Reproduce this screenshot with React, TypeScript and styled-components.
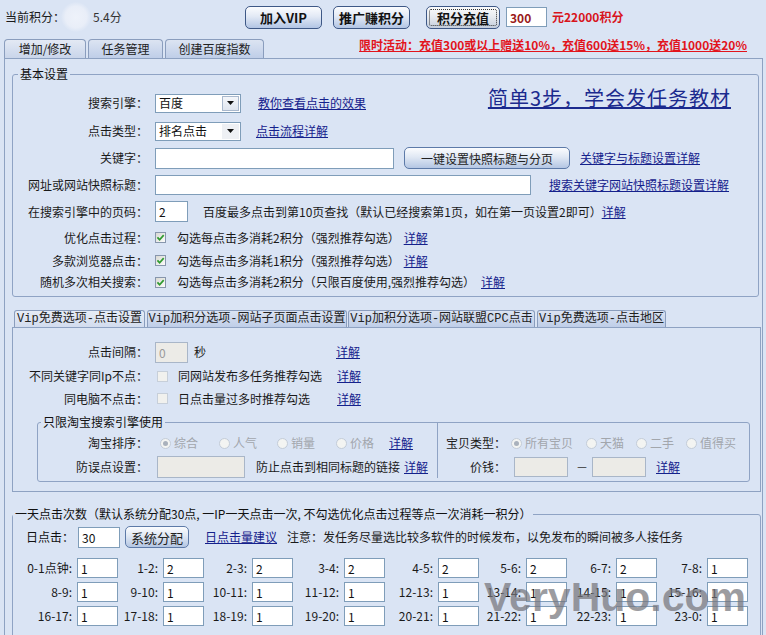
import React from "react";
import styled, { createGlobalStyle } from "styled-components";

const GlobalStyle = createGlobalStyle`
  html, body {
    margin: 0;
    padding: 0;
  }
  body {
    background: #dae4f4;
    font-family: "Noto Sans CJK SC", "Noto Sans", sans-serif;
    font-size: 12px;
    line-height: 16px;
    color: #111;
  }
`;

const hourRows: [string, string][] = [
  ["0-1点钟:", "1"],
  ["1-2:", "2"],
  ["2-3:", "2"],
  ["3-4:", "2"],
  ["4-5:", "2"],
  ["5-6:", "2"],
  ["6-7:", "2"],
  ["7-8:", "1"],
];
for (let h = 8; h < 24; h++) hourRows.push([`${h}-${(h + 1) % 24}:`, "1"]);

const Tick = () => (
  <svg width="9" height="9" viewBox="0 0 9 9">
    <path d="M1.4 4.4 L3.6 6.7 L7.7 2.1" fill="none" stroke="#2f9a2f" strokeWidth="1.7" />
  </svg>
);

const DownArrow = () => (
  <svg width="7" height="4" viewBox="0 0 7 4">
    <path d="M0 0 H7 L3.5 4 Z" fill="#111" />
  </svg>
);

const App = () => {
  return (
    <Page>
      <GlobalStyle />

      <TopBar>
        <ScoreBox>
          当前积分：
          <Smudge />
          <ScoreValue>5.4分</ScoreValue>
        </ScoreBox>
        <TopButton $w={77}>加入VIP</TopButton>
        <TopButton $w={77} $ml={11}>推广赚积分</TopButton>
        <TopButton $w={74} $ml={16} $focus>积分充值</TopButton>
        <ChargeInput readOnly value="300" />
        <ChargeText>元22000积分</ChargeText>
      </TopBar>

      <TabStrip>
        <MainTab $w={82} $active>增加/修改</MainTab>
        <MainTab $w={75}>任务管理</MainTab>
        <MainTab $w={99}>创建百度指数</MainTab>
        <Promo href="#">限时活动：充值300或以上赠送10%，充值600送15%，充值1000送20%</Promo>
      </TabStrip>

      <TabBody>
        {/* --- 基本设置 --- */}
        <BasicGroup>
          <GroupTitle $ml={5}>基本设置</GroupTitle>

          <FormRow $h={28}>
            <FieldLabel>搜索引擎：</FieldLabel>
            <Select>
              <SelectText>百度</SelectText>
              <SelectArrow $boxed>
                <DownArrow />
              </SelectArrow>
            </Select>
            <TextLink href="#" $ml={17}>教你查看点击的效果</TextLink>
            <BigLink href="#">简单3步，学会发任务教材</BigLink>
          </FormRow>

          <FormRow $h={28}>
            <FieldLabel>点击类型：</FieldLabel>
            <Select>
              <SelectText>排名点击</SelectText>
              <SelectArrow>
                <DownArrow />
              </SelectArrow>
            </Select>
            <TextLink href="#" $ml={15}>点击流程详解</TextLink>
          </FormRow>

          <FormRow $h={26}>
            <FieldLabel>关键字：</FieldLabel>
            <Field readOnly value="" $w={239} $h={21} />
            <PlainButton $w={166} $h={22} $ml={10}>一键设置快照标题与分页</PlainButton>
            <TextLink href="#" $ml={10}>关键字与标题设置详解</TextLink>
          </FormRow>

          <FormRow $h={27}>
            <FieldLabel>网址或网站快照标题：</FieldLabel>
            <Field readOnly value="" $w={376} $h={20} />
            <TextLink href="#" $ml={18}>搜索关键字网站快照标题设置详解</TextLink>
          </FormRow>

          <FormRow $h={27}>
            <FieldLabel>在搜索引擎中的页码：</FieldLabel>
            <Field readOnly value="2" $w={33} $h={21} />
            <Hint $ml={15}>百度最多点击到第10页查找（默认已经搜索第1页，如在第一页设置2即可）</Hint>
            <TextLink href="#" $ml={0}>详解</TextLink>
          </FormRow>

          <FormRow $h={25}>
            <FieldLabel>优化点击过程：</FieldLabel>
            <Check>
              <Tick />
            </Check>
            <Hint $ml={11}>勾选每点击多消耗2积分（强烈推荐勾选）</Hint>
            <TextLink href="#" $ml={4}>详解</TextLink>
          </FormRow>

          <FormRow $h={21}>
            <FieldLabel>多款浏览器点击：</FieldLabel>
            <Check>
              <Tick />
            </Check>
            <Hint $ml={11}>勾选每点击多消耗1积分（强烈推荐勾选）</Hint>
            <TextLink href="#" $ml={4}>详解</TextLink>
          </FormRow>

          <FormRow $h={22}>
            <FieldLabel>随机多次相关搜索：</FieldLabel>
            <Check>
              <Tick />
            </Check>
            <Hint $ml={11}>勾选每点击多消耗2积分（只限百度使用,强烈推荐勾选）</Hint>
            <TextLink href="#" $ml={6}>详解</TextLink>
          </FormRow>
        </BasicGroup>

        {/* --- Vip 选项 --- */}
        <VipStrip>
          <VipTab $w={131} $active>Vip免费选项-点击设置</VipTab>
          <VipTab $w={200} $ml={2}>Vip加积分选项-网站子页面点击设置</VipTab>
          <VipTab $w={187} $ml={1}>Vip加积分选项-网站联盟CPC点击</VipTab>
          <VipTab $w={129} $ml={2}>Vip免费选项-点击地区</VipTab>
        </VipStrip>

        <VipPanel>
          <FormRow $h={24}>
            <FieldLabel>点击间隔：</FieldLabel>
            <ControlCell>
              <Field readOnly value="0" $w={33} $h={21} $disabled />
              <Hint $ml={6}>秒</Hint>
            </ControlCell>
            <TextLink href="#">详解</TextLink>
          </FormRow>

          <FormRow $h={24}>
            <FieldLabel>不同关键字同Ip不点：</FieldLabel>
            <ControlCell>
              <Check $off $ml={2} />
              <Hint $ml={10}>同网站发布多任务推荐勾选</Hint>
            </ControlCell>
            <TextLink href="#" $ml={1}>详解</TextLink>
          </FormRow>

          <FormRow $h={21}>
            <FieldLabel>同电脑不点击：</FieldLabel>
            <ControlCell>
              <Check $off $ml={2} />
              <Hint $ml={10}>日点击量过多时推荐勾选</Hint>
            </ControlCell>
            <TextLink href="#" $ml={1}>详解</TextLink>
          </FormRow>

          <TaobaoGroup>
            <GroupTitle $ml={3}>只限淘宝搜索引擎使用</GroupTitle>
            <TaobaoBody>
              <TaobaoLeft>
                <FormRow $h={24}>
                  <FieldLabel $w={110} $mr={7}>淘宝排序：</FieldLabel>
                  <RadioItem $w={59} $ml={5}>
                    <Radio $on />
                    综合
                  </RadioItem>
                  <RadioItem $w={58}>
                    <Radio />
                    人气
                  </RadioItem>
                  <RadioItem $w={59}>
                    <Radio />
                    销量
                  </RadioItem>
                  <RadioItem $w={36}>
                    <Radio />
                    价格
                  </RadioItem>
                  <TextLink href="#" $ml={17}>详解</TextLink>
                </FormRow>
                <FormRow $h={23}>
                  <FieldLabel $w={110} $mr={9}>防误点设置：</FieldLabel>
                  <Field readOnly value="" $w={88} $h={22} $disabled />
                  <Hint $ml={11}>防止点击到相同标题的链接</Hint>
                  <TextLink href="#" $ml={4}>详解</TextLink>
                </FormRow>
              </TaobaoLeft>

              <TaobaoRight>
                <FormRow $h={24}>
                  <FieldLabel $w={60} $mr={0}>宝贝类型：</FieldLabel>
                  <RadioItem $w={75} $ml={5}>
                    <Radio $on />
                    所有宝贝
                  </RadioItem>
                  <RadioItem $w={50}>
                    <Radio />
                    天猫
                  </RadioItem>
                  <RadioItem $w={50}>
                    <Radio />
                    二手
                  </RadioItem>
                  <RadioItem $w={52}>
                    <Radio />
                    值得买
                  </RadioItem>
                </FormRow>
                <FormRow $h={23}>
                  <FieldLabel $w={60} $mr={8}>价钱：</FieldLabel>
                  <Field readOnly value="" $w={54} $h={20} $disabled />
                  <Dash>－</Dash>
                  <Field readOnly value="" $w={54} $h={20} $disabled />
                  <TextLink href="#" $ml={10}>详解</TextLink>
                </FormRow>
              </TaobaoRight>
            </TaobaoBody>
          </TaobaoGroup>
        </VipPanel>

        {/* --- 一天点击次数 --- */}
        <DayGroup>
          <GroupTitle $ml={0}>
            一天点击次数（默认系统分配30点, 一IP一天点击一次, 不勾选优化点击过程等点一次消耗一积分）
          </GroupTitle>
          <DayRow>
            日点击：
            <Field readOnly value="30" $w={42} $h={21} $ml={4} />
            <PlainButton $w={64} $h={22} $ml={5} $big>系统分配</PlainButton>
            <TextLink href="#" $ml={16}>日点击量建议</TextLink>
            <Hint $ml={10}>注意：发任务尽量选比较多软件的时候发布，以免发布的瞬间被多人接任务</Hint>
          </DayRow>
          <HourGrid>
            {hourRows.map(([label, value]) => (
              <HourCell key={label}>
                <HourLabel>{label}</HourLabel>
                <Field readOnly value={value} $w={41} $h={20} />
              </HourCell>
            ))}
          </HourGrid>
        </DayGroup>
      </TabBody>

      <Watermark>VeryHuo.com</Watermark>
    </Page>
  );
};

//  --- Page & top bar ---
const Page = styled.div`
  position: relative;
  width: 766px;
  height: 635px;
  overflow: hidden;
  box-sizing: border-box;
  padding: 0 3px 0 4px;
`;

const TopBar = styled.div`
  display: flex;
  align-items: center;
  height: 34px;
  padding-left: 1px;
`;

const ScoreBox = styled.div`
  display: flex;
  align-items: center;
  width: 240px;
  flex: none;
  color: #1a1a1a;
`;

const Smudge = styled.span`
  flex: none;
  width: 30px;
  height: 30px;
  margin-left: -4px;
  border-radius: 50%;
  background: radial-gradient(circle, #eef2fa 0%, #e9eef8 50%, rgba(228, 235, 247, 0) 72%);
`;

const ScoreValue = styled.span`
  margin-left: 2px;
  color: #333;
`;

const TopButton = styled.button<{ $w: number; $ml?: number; $focus?: boolean }>`
  flex: none;
  width: ${(p) => p.$w}px;
  height: 23px;
  margin-left: ${(p) => p.$ml ?? 0}px;
  padding: 0;
  border: 1px solid #3e5886;
  border-radius: 5px;
  background: ${(p) =>
    p.$focus
      ? "linear-gradient(#fbfbfb, #e6e9ee 50%, #c3cddd)"
      : "linear-gradient(#fbfcfe, #e2e9f5 45%, #b2c5e4)"};
  font-family: "Noto Sans CJK SC", sans-serif;
  font-size: 13px;
  font-weight: bold;
  line-height: 21px;
  color: #111;
  outline: ${(p) => (p.$focus ? "1px dotted #333" : "none")};
  outline-offset: -4px;
`;

const ChargeInput = styled.input`
  flex: none;
  box-sizing: border-box;
  width: 41px;
  height: 20px;
  margin-left: 6px;
  padding: 0 3px;
  border: 1px solid #7f9db9;
  background: #fff;
  font-family: "Noto Sans CJK SC", sans-serif;
  font-size: 12px;
  font-weight: bold;
  color: #9a1a1a;
`;

const ChargeText = styled.span`
  margin-left: 5px;
  color: #d8141c;
  font-weight: bold;
`;

//  --- Tabs ---
const TabStrip = styled.div`
  display: flex;
  align-items: flex-end;
  height: 24px;
`;

const MainTab = styled.div<{ $w: number; $active?: boolean }>`
  flex: none;
  box-sizing: border-box;
  width: ${(p) => p.$w}px;
  height: 19px;
  margin-right: 2px;
  border: 1px solid #8a9dbd;
  border-bottom: none;
  border-radius: 4px 4px 0 0;
  background: ${(p) =>
    p.$active ? "linear-gradient(#e3e9f4, #c9d5ea)" : "linear-gradient(#dce4f2, #bfcee8)"};
  text-align: center;
  line-height: 18px;
  color: #222;
`;

const Promo = styled.a`
  align-self: flex-start;
  margin: 3px 16px 0 auto;
  color: #e2141c;
  font-weight: bold;
  text-decoration: underline;
  white-space: nowrap;
`;

const TabBody = styled.div`
  border: 1px solid #8ea2c2;
  border-bottom: none;
  padding: 7px 1px 0 7px;
  height: 600px;
`;

//  --- Fieldsets ---
const Group = styled.fieldset`
  margin: 0;
  min-width: 0;
  border: 1px solid #8fa3c4;
  border-radius: 3px;
`;

const GroupTitle = styled.legend<{ $ml: number }>`
  margin-left: ${(p) => p.$ml}px;
  padding: 0 2px;
  font-size: 12px;
  line-height: 16px;
  color: #111;
  white-space: nowrap;
`;

const BasicGroup = styled(Group)`
  margin-right: 2px;
  padding: 7px 0 3px;
`;

const FormRow = styled.div<{ $h: number }>`
  display: flex;
  align-items: center;
  height: ${(p) => p.$h}px;
  white-space: nowrap;
`;

const FieldLabel = styled.span<{ $w?: number; $mr?: number }>`
  flex: none;
  width: ${(p) => p.$w ?? 135}px;
  margin-right: ${(p) => p.$mr ?? 7}px;
  text-align: right;
  color: #1a1a1a;
`;

const Select = styled.div`
  flex: none;
  display: flex;
  align-items: center;
  box-sizing: border-box;
  width: 86px;
  height: 19px;
  padding-left: 3px;
  border: 1px solid #7f9db9;
  background: #fff;
`;

const SelectText = styled.span`
  flex: 1;
`;

const SelectArrow = styled.span<{ $boxed?: boolean }>`
  display: flex;
  align-items: center;
  justify-content: center;
  box-sizing: border-box;
  width: 17px;
  height: 15px;
  margin-right: 1px;
  border: 1px solid ${(p) => (p.$boxed ? "#a9b8cd" : "transparent")};
  background: ${(p) => (p.$boxed ? "linear-gradient(#f4f6fa, #dfe5ef)" : "#eef0f4")};
`;

const Field = styled.input<{ $w: number; $h: number; $ml?: number; $disabled?: boolean }>`
  flex: none;
  box-sizing: border-box;
  width: ${(p) => p.$w}px;
  height: ${(p) => p.$h}px;
  margin: 0 0 0 ${(p) => p.$ml ?? 0}px;
  padding: 0 3px;
  border: 1px solid ${(p) => (p.$disabled ? "#a9b6c8" : "#7f9db9")};
  background: ${(p) => (p.$disabled ? "#ecebe7" : "#fff")};
  font-family: "Noto Sans CJK SC", sans-serif;
  font-size: 12px;
  color: ${(p) => (p.$disabled ? "#9a9a9a" : "#111")};
  outline: none;
`;

const PlainButton = styled.button<{ $w: number; $h: number; $ml: number; $big?: boolean }>`
  flex: none;
  width: ${(p) => p.$w}px;
  height: ${(p) => p.$h}px;
  margin-left: ${(p) => p.$ml}px;
  padding: 0;
  border: 1px solid #5d7aa8;
  border-radius: 5px;
  background: linear-gradient(#fbfcfe, #e0e8f4 45%, #b4c6e3);
  font-family: "Noto Sans CJK SC", sans-serif;
  font-size: ${(p) => (p.$big ? 13 : 12)}px;
  color: #222;
`;

const TextLink = styled.a<{ $ml?: number }>`
  flex: none;
  margin-left: ${(p) => p.$ml ?? 0}px;
  color: #15218c;
  text-decoration: underline;
  white-space: nowrap;
`;

const BigLink = styled.a`
  align-self: flex-start;
  margin: -3px 27px 0 auto;
  font-size: 20px;
  line-height: 24px;
  letter-spacing: 1px;
  color: #1b2a8e;
  text-decoration: underline;
`;

const Hint = styled.span<{ $ml?: number }>`
  flex: none;
  margin-left: ${(p) => p.$ml ?? 0}px;
  color: #1a1a1a;
`;

const Check = styled.span<{ $off?: boolean; $ml?: number }>`
  flex: none;
  display: inline-flex;
  align-items: center;
  justify-content: center;
  box-sizing: border-box;
  width: 11px;
  height: 11px;
  margin-left: ${(p) => p.$ml ?? 0}px;
  border: 1px solid ${(p) => (p.$off ? "#c7cfd9" : "#8796ac")};
  background: ${(p) => (p.$off ? "#f1f1ee" : "linear-gradient(135deg, #d9d9d3, #fbfbfb)")};
`;

//  --- Vip tabs ---
const VipStrip = styled.div`
  display: flex;
  align-items: flex-end;
  height: 17px;
  margin-top: 13px;
  padding-left: 2px;
`;

const VipTab = styled.div<{ $w: number; $ml?: number; $active?: boolean }>`
  flex: none;
  box-sizing: border-box;
  width: ${(p) => p.$w}px;
  height: 17px;
  margin-left: ${(p) => p.$ml ?? 0}px;
  border: 1px solid #8a9dbd;
  border-bottom: none;
  border-radius: 3px 3px 0 0;
  background: ${(p) =>
    p.$active ? "linear-gradient(#e6ecf6, #d2dcee)" : "linear-gradient(#dbe3f2, #bfcee8)"};
  font-family: "Liberation Mono", "Noto Sans CJK SC", monospace;
  font-size: 12px;
  line-height: 16px;
  text-align: center;
  white-space: nowrap;
  overflow: hidden;
  color: #222;
`;

const VipPanel = styled.div`
  border: 1px solid #8ea2c2;
  padding: 12px 0 9px;
`;

const ControlCell = styled.div`
  flex: none;
  display: flex;
  align-items: center;
  width: 181px;
`;

const TaobaoGroup = styled(Group)`
  margin: 5px 10px 0 24px;
  padding: 1px 0 3px;
`;

const TaobaoBody = styled.div`
  display: flex;
  margin-top: -9px;
  padding-top: 9px;
`;

const TaobaoLeft = styled.div`
  flex: none;
  width: 399px;
  border-right: 1px solid #8fa3c4;
  margin-top: -9px;
  padding-top: 9px;
`;

const TaobaoRight = styled.div`
  flex: 1;
  padding-left: 8px;
`;

const RadioItem = styled.span<{ $w: number; $ml?: number }>`
  flex: none;
  display: inline-flex;
  align-items: center;
  gap: 3px;
  width: ${(p) => p.$w}px;
  margin-left: ${(p) => p.$ml ?? 0}px;
  color: #a2a6ac;
`;

const Radio = styled.span<{ $on?: boolean }>`
  flex: none;
  display: inline-flex;
  align-items: center;
  justify-content: center;
  box-sizing: border-box;
  width: 11px;
  height: 11px;
  border: 1px solid #c3ccd8;
  border-radius: 50%;
  background: #f3f4f2;

  &::after {
    content: "";
    width: 5px;
    height: 5px;
    border-radius: 50%;
    background: ${(p) => (p.$on ? "#a9b1bc" : "transparent")};
  }
`;

const Dash = styled.span`
  margin: 0 4px 0 8px;
  color: #333;
`;

//  --- Daily clicks ---
const DayGroup = styled(Group)`
  margin-top: 14px;
  padding: 4px 0 20px;
`;

const DayRow = styled.div`
  display: flex;
  align-items: center;
  height: 22px;
  padding-left: 13px;
  white-space: nowrap;
`;

const HourGrid = styled.div`
  display: grid;
  grid-template-columns: 105px 86px 89px 92px 94px 88px 90px 91px;
  grid-auto-rows: 20px;
  row-gap: 4px;
  margin-top: 10px;
`;

const HourCell = styled.div`
  display: flex;
  align-items: center;
  justify-content: flex-end;
`;

const HourLabel = styled.span`
  margin-right: 5px;
  color: #1a1a1a;
  white-space: nowrap;
`;

const Watermark = styled.div`
  position: absolute;
  left: 484px;
  top: 577px;
  font-family: "Liberation Sans", sans-serif;
  font-size: 41px;
  font-weight: bold;
  line-height: 1;
  color: rgba(118, 118, 124, 0.72);
  pointer-events: none;
`;

export default App;
